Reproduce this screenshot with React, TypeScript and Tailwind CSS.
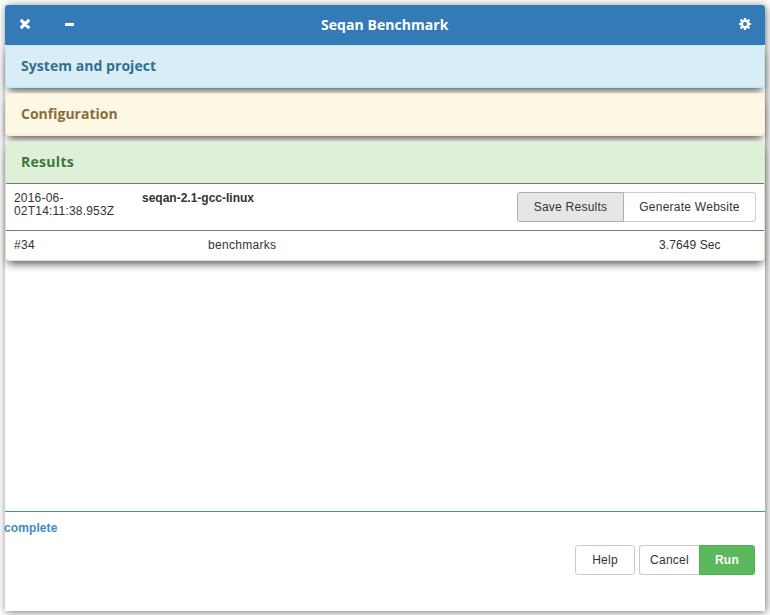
import type { ReactNode } from "react";

const btn = "h-[30px] border text-center text-[12px] leading-[28px] tracking-[0.25px]";

function Heading({ className, children }: { className: string; children: ReactNode }) {
  return (
    <h2 className={`pl-[15px] font-['Open_Sans',sans-serif] text-[14px] font-bold leading-[39px] ${className}`}>
      {children}
    </h2>
  );
}

export default function App() {
  return (
    <div className="h-[615px] w-[770px] overflow-hidden bg-white p-[5px] font-['Liberation_Sans',Arial,sans-serif] text-[12px] text-[#333]">
      <main className="flex h-[606px] w-[760px] flex-col rounded-t-[3px] bg-white shadow-[1px_1px_9px_rgba(0,0,0,0.55)]">
        <header className="z-10 flex h-10 shrink-0 items-center rounded-t-[3px] bg-[#337ab7] text-white">
          <button className="ml-[15px] -mt-[2px] h-[10px] w-[10px]" aria-label="Close">
            <svg viewBox="0 0 10 10" className="block h-[10px] w-[10px]">
              <path d="M1.8 1.8 8.2 8.2M8.2 1.8 1.8 8.2" stroke="currentColor" strokeWidth="3.2" strokeLinecap="round" />
            </svg>
          </button>
          <button className="ml-[35px] -mt-px h-[3px] w-[9px] bg-white" aria-label="Minimize" />
          <h1 className="ml-[247px] w-[128px] whitespace-nowrap font-['Open_Sans',sans-serif] text-[14px] font-bold leading-10 tracking-[0.05px]">
            Seqan Benchmark
          </h1>
          <button className="ml-auto mr-[14px] -mt-[2px] h-3 w-3" aria-label="Settings">
            <svg viewBox="0 0 12 12" className="block h-3 w-3">
              <circle cx="6" cy="6" r="3.3" fill="none" stroke="currentColor" strokeWidth="2.4" />
              <path d="M6 0v2M6 10v2M0 6h2M10 6h2M1.6 1.6l1.6 1.6M8.8 8.8l1.6 1.6M1.6 10.4l1.6-1.6M8.8 3.2l1.6-1.6" stroke="currentColor" strokeWidth="2.2" />
            </svg>
          </button>
        </header>

        <section className="h-[43px] shrink-0 rounded-[4px] border border-b-2 border-[#bce8f1] bg-[#d9edf7] shadow-[0_6px_8px_-3px_rgba(0,0,0,0.65)]">
          <Heading className="tracking-[0.05px] text-[#31708f]">System and project</Heading>
        </section>
        <section className="mt-[5px] h-[43px] shrink-0 rounded-[4px] border border-b-2 border-[#faebcc] bg-[#fcf8e3] shadow-[0_6px_8px_-3px_rgba(0,0,0,0.65)]">
          <Heading className="text-[#8a6d3b]">Configuration</Heading>
        </section>
        <section className="mt-[5px] h-[120px] shrink-0 rounded-[4px] border border-[#d6e9c6] bg-white shadow-[0_6px_8px_-3px_rgba(0,0,0,0.65)]">
          <Heading className="h-[41px] rounded-t-[3px] bg-[#dff0d8] tracking-[0.3px] text-[#3c763d]">Results</Heading>
          <div className="flex h-[47px] border-t border-[#777] pl-2 pr-2">
            <div className="w-[128px] pt-[8px] leading-[13px] tracking-[0.2px]">
              2016-06-
              <br />
              02T14:11:38.953Z
            </div>
            <div className="pt-[8px] font-bold leading-[13px]">seqan-2.1-gcc-linux</div>
            <div className="ml-auto flex pt-2">
              <button className={`${btn} w-[107px] rounded-l-[3px] border-[#adadad] bg-[#e6e6e6]`}>Save Results</button>
              <button className={`${btn} w-[132px] rounded-r-[3px] border-l-0 border-[#ccc] bg-white`}>Generate Website</button>
            </div>
          </div>
          <div className="flex h-[30px] border-t border-[#777] pl-2 leading-[28px] tracking-[0.3px]">
            <span className="w-[194px]">#34</span>
            <span className="w-[451px]">benchmarks</span>
            <span className="tracking-[0.1px]">3.7649 Sec</span>
          </div>
        </section>

        <footer className="mt-auto h-[100px] border-t border-[#428bca]">
          <div className="pt-[9px] font-bold leading-[14px] tracking-[0.1px] text-[#428bca] -ml-px">complete</div>
          <div className="mt-[10px] flex justify-end pr-[10px]">
            <button className={`${btn} mr-1 w-[60px] rounded-[3px] border-[#ccc]`}>Help</button>
            <button className={`${btn} w-[60px] rounded-l-[3px] border-r-0 border-[#ccc]`}>Cancel</button>
            <button className={`${btn} w-[56px] rounded-r-[3px] border-[#4cae4c] bg-[#5cb85c] font-bold text-white`}>Run</button>
          </div>
        </footer>
      </main>
    </div>
  );
}
